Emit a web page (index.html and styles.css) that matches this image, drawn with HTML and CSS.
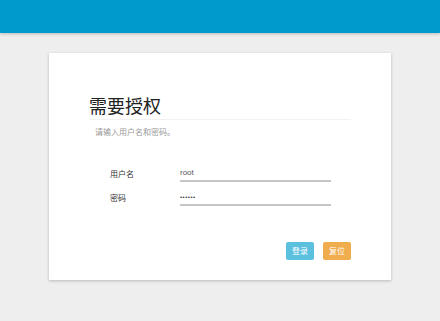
FILE: index.html
```html
<!DOCTYPE html>
<html lang="zh">
<head>
<meta charset="utf-8">
<title>需要授权</title>
<link rel="stylesheet" href="styles.css">
</head>
<body>
<header class="topbar"></header>
<main class="card">
  <h1 class="title">需要授权</h1>
  <p class="subtitle">请输入用户名和密码。</p>
  <div class="form">
    <div class="row">
      <span class="label">用户名</span>
      <div class="field">root</div>
    </div>
    <div class="row">
      <span class="label">密码</span>
      <div class="field dots">••••••</div>
    </div>
  </div>
  <div class="actions">
    <button class="btn btn-login">登录</button>
    <button class="btn btn-reset">复位</button>
  </div>
</main>
</body>
</html>
```
FILE: styles.css
```css
html, body {
  margin: 0;
  padding: 0;
}
body {
  background: #eeeeee;
  font-family: "Liberation Sans", "Noto Sans CJK SC", sans-serif;
  height: 321px;
  overflow: hidden;
}
.topbar {
  height: 33px;
  background: #009acd;
  box-shadow: 0 1px 3px rgba(0, 0, 0, 0.22);
}
.card {
  box-sizing: border-box;
  margin: 20px 0 0 49px;
  width: 342px;
  height: 227px;
  background: #ffffff;
  box-shadow: 0 1px 3px rgba(0, 0, 0, 0.22);
  padding: 40px 40px 20px 40px;
  display: flex;
  flex-direction: column;
}
.title {
  margin: 0;
  font-family: "Noto Sans CJK SC", sans-serif;
  font-weight: normal;
  font-size: 18px;
  line-height: 24px;
  color: #222;
  padding-bottom: 2px;
  border-bottom: 1px solid #f2f2f2;
}
.subtitle {
  margin: 6px 0 0 6px;
  font-family: "Noto Sans CJK SC", sans-serif;
  font-size: 8px;
  line-height: 12px;
  color: #999;
}
.form {
  margin-top: 28px;
  display: flex;
  flex-direction: column;
  gap: 8px;
  padding-left: 21px;
}
.row {
  display: flex;
  align-items: flex-start;
}
.label {
  width: 70px;
  font-family: "Noto Sans CJK SC", sans-serif;
  font-size: 8px;
  line-height: 15px;
  color: #333;
}
.field {
  width: 151px;
  height: 14px;
  line-height: 13px;
  font-size: 8px;
  color: #555;
  border-bottom: 2px solid #c6c6c6;
}
.dots {
  font-size: 6px;
  letter-spacing: 0.5px;
  line-height: 15px;
  color: #333;
}
.actions {
  margin-top: 36px;
  display: flex;
  justify-content: flex-end;
  gap: 9px;
}
.btn {
  width: 28px;
  height: 18px;
  padding: 0;
  border: none;
  border-radius: 2px;
  color: #fff;
  font-family: "Noto Sans CJK SC", sans-serif;
  font-size: 8px;
  line-height: 18px;
}
.btn-login {
  background: #5bc0de;
}
.btn-reset {
  background: #f0ad4e;
}
```
